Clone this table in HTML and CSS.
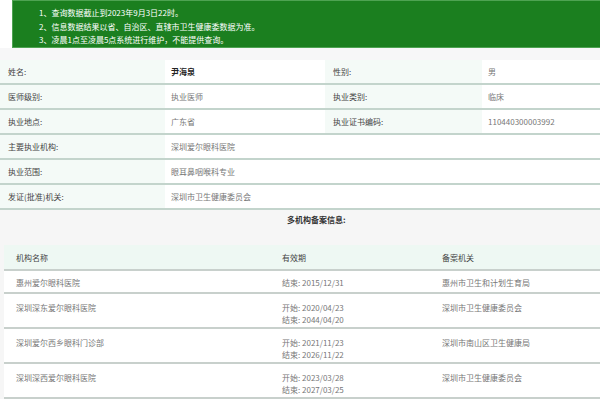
FILE: index.html
```html
<!DOCTYPE html>
<html lang="zh">
<head>
<meta charset="utf-8">
<link rel="stylesheet" href="styles.css">
</head>
<body>
<div class="notice">
  <p>1、查询数据截止到2023年9月3日22时。</p>
  <p>2、信息数据结果以省、自治区、直辖市卫生健康委数据为准。</p>
  <p>3、凌晨1点至凌晨5点系统进行维护，不能提供查询。</p>
</div>
<div class="gap"></div>
<table class="info">
  <colgroup><col class="c1"><col class="c2"><col class="c3"><col class="c4"></colgroup>
  <tr><td class="lab">姓名:</td><td class="name">尹海泉</td><td class="lab">性别:</td><td>男</td></tr>
  <tr><td class="lab">医师级别:</td><td>执业医师</td><td class="lab">执业类别:</td><td>临床</td></tr>
  <tr><td class="lab">执业地点:</td><td>广东省</td><td class="lab">执业证书编码:</td><td>110440300003992</td></tr>
  <tr><td class="lab">主要执业机构:</td><td colspan="3">深圳爱尔眼科医院</td></tr>
  <tr><td class="lab">执业范围:</td><td colspan="3">眼耳鼻咽喉科专业</td></tr>
  <tr><td class="lab">发证(批准)机关:</td><td colspan="3">深圳市卫生健康委员会</td></tr>
</table>
<div class="multi">
  <div class="multi-title">多机构备案信息:</div>
  <table class="sub">
    <colgroup><col class="s1"><col class="s2"><col class="s3"></colgroup>
    <tr class="head"><td>机构名称</td><td>有效期</td><td>备案机关</td></tr>
    <tr class="one"><td>惠州爱尔眼科医院</td><td>结束: 2015/12/31</td><td>惠州市卫生和计划生育局</td></tr>
    <tr><td>深圳深东爱尔眼科医院</td><td>开始: 2020/04/23<br>结束: 2044/04/20</td><td>深圳市卫生健康委员会</td></tr>
    <tr><td>深圳爱尔西乡眼科门诊部</td><td>开始: 2021/11/23<br>结束: 2026/11/22</td><td>深圳市南山区卫生健康局</td></tr>
    <tr><td>深圳深西爱尔眼科医院</td><td>开始: 2023/03/28<br>结束: 2027/03/25</td><td>深圳市卫生健康委员会</td></tr>
  </table>
</div>
</body>
</html>
```
FILE: styles.css
```css
html, body {
  margin: 0;
  padding: 0;
  background: #ffffff;
  font-family: "Noto Sans CJK SC", "Noto Sans", sans-serif;
  font-size: 8px;
  color: #555;
  overflow: hidden;
}
.notice {
  margin-left: 12px;
  height: 48px;
  box-sizing: border-box;
  background: #1b7f1f;
  border: 1px solid #4ea352;
  border-right: none;
  padding: 5px 0 0 26px;
  color: #ffffff;
}
.notice p {
  margin: 0;
  line-height: 13.5px;
  font-size: 8px;
}
.gap {
  height: 12px;
  background: #f7f7f8;
}
.info {
  width: 100%;
  border-collapse: collapse;
  table-layout: fixed;
}
.c1 { width: 165px; }
.c2 { width: 160px; }
.c3 { width: 157px; }
.c4 { width: 118px; }
.info td {
  height: 23px;
  padding: 0 0 0 6px;
  border-bottom: 2px solid #c3d4cc;
  color: #777;
  white-space: nowrap;
}
.info td.lab {
  padding-left: 8px;
  background: #f4faf7;
  color: #444;
}
.info td.name {
  color: #222;
  font-weight: bold;
}
.multi {
  background: #f6f6f6;
  padding: 0 0 0 4px;
}
.multi-title {
  height: 35px;
  line-height: 20px;
  padding-left: 283px;
  color: #333;
  font-weight: bold;
}
.sub {
  width: 100%;
  border-collapse: collapse;
  table-layout: fixed;
  background: #ffffff;
}
.s1 { width: 271px; }
.s2 { width: 158px; }
.sub td {
  vertical-align: top;
  padding: 8px 0 0 12px;
  height: 25px;
  line-height: 12px;
  border-bottom: 2px solid #c8d0cc;
  color: #777;
  white-space: nowrap;
}
.sub tr td:nth-child(2) { padding-left: 7px; }
.sub tr td:nth-child(3) { padding-left: 9px; }
.sub tr.head td {
  background: #eef8f3;
  height: 17px;
  padding-top: 7px;
  color: #444;
}
.sub tr.one td {
  height: 15px;
  padding-top: 6px;
}
```
